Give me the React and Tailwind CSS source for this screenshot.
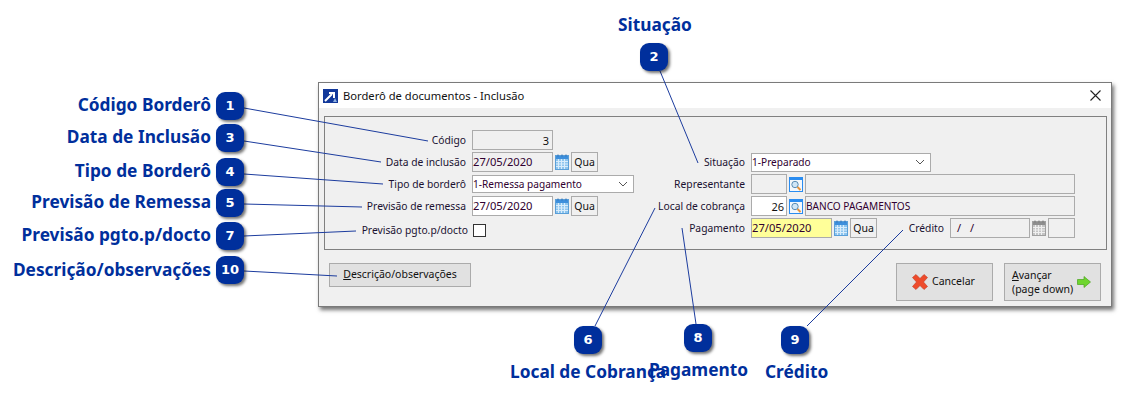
import React from 'react';

const FONT = 'font-["Noto_Sans","Open_Sans",sans-serif]';

const callouts = [
  { n: '1', title: 'Código Borderô', badge: 'left-[216px] top-[92px]', text: 'right-[914px] top-[94px]' },
  { n: '3', title: 'Data de Inclusão', badge: 'left-[216px] top-[124px]', text: 'right-[914px] top-[126px]' },
  { n: '4', title: 'Tipo de Borderô', badge: 'left-[216px] top-[158px]', text: 'right-[914px] top-[160px]' },
  { n: '5', title: 'Previsão de Remessa', badge: 'left-[216px] top-[189px]', text: 'right-[914px] top-[191px]' },
  { n: '7', title: 'Previsão pgto.p/docto', badge: 'left-[216px] top-[222px]', text: 'right-[914px] top-[224px]' },
  { n: '10', title: 'Descrição/observações', badge: 'left-[216px] top-[256px]', text: 'right-[914px] top-[259px]' },
  { n: '2', title: 'Situação', badge: 'left-[640px] top-[43px]', text: 'left-[618px] top-[14px]' },
  { n: '6', title: 'Local de Cobrança', badge: 'left-[574px] top-[326px]', text: 'left-[510px] top-[361px]' },
  { n: '8', title: 'Pagamento', badge: 'left-[684px] top-[324px]', text: 'left-[649px] top-[359px]' },
  { n: '9', title: 'Crédito', badge: 'left-[781px] top-[326px]', text: 'left-[765px] top-[361px]' },
];

const lines = [
  [244, 108, 428, 141],
  [244, 141, 381, 162],
  [244, 174, 383, 184],
  [244, 204, 362, 207],
  [244, 236, 356, 231],
  [244, 271, 337, 276],
  [660, 71, 698, 163],
  [595, 326, 655, 208],
  [696, 324, 682, 228],
  [807, 326, 903, 230],
];

const CalendarIcon = ({ off }) => (
  <svg width="14" height="16" viewBox="0 0 14 16" className="shrink-0">
    <rect x="0.5" y="1.5" width="13" height="14" fill={off ? '#c4c4c4' : '#8cc4ee'} stroke={off ? '#a0a0a0' : '#5a9fd8'} />
    <rect x="1" y="2" width="12" height="3" fill={off ? '#8e8e8e' : '#3d8fdc'} />
    <path d="M3 0.5v2M7 0.5v2M11 0.5v2" stroke={off ? '#777' : '#2f6fb5'} />
    <path d="M1 7.5h12M1 10h12M1 12.5h12M3.5 5v10M6.5 5v10M9.5 5v10" stroke={off ? '#efefef' : '#d8ecfb'} />
  </svg>
);

const LookupIcon = () => (
  <svg width="14" height="15" viewBox="0 0 14 15" className="shrink-0">
    <rect x="0.5" y="0.5" width="13" height="14" fill="#f4f8fc" stroke="#2a8cf0" />
    <rect x="1" y="1" width="12" height="2" fill="#2a8cf0" />
    <circle cx="6" cy="7.5" r="3.2" fill="#cfe6f7" stroke="#5b8db5" />
    <path d="M8.5 10l3 3" stroke="#e8923a" strokeWidth="2" />
  </svg>
);

const Chevron = () => (
  <svg width="10" height="6" viewBox="0 0 10 6" className="shrink-0">
    <path d="M1 1l4 4 4-4" fill="none" stroke="#555" />
  </svg>
);

const Field = ({ className = '', children }) => (
  <div className={`h-5 border border-[#ababab] flex items-center leading-none text-[#300030] shrink-0 ${className}`}>
    {children}
  </div>
);

const Qua = ({ empty }) => (
  <div className="h-5 w-[27px] border border-[#ababab] flex items-center justify-center text-[10.5px] leading-none text-[#111] shrink-0">
    {empty ? '' : 'Qua'}
  </div>
);

const Label = ({ className = '', children }) => (
  <span className={`text-[10.3px] leading-none text-[#1a1030] text-right shrink-0 ${className}`}>{children}</span>
);

const Row = ({ className = '', children }) => (
  <div className={`flex items-center h-5 ${className}`}>{children}</div>
);

const Btn = ({ className = '', children }) => (
  <div className={`border border-[#ababab] bg-[#e1e1e1] flex items-center text-[10.5px] text-[#111] ${className}`}>
    {children}
  </div>
);

export default function App() {
  return (
    <div className={`relative w-[1125px] h-[401px] bg-white overflow-hidden pt-[82px] pl-[318px] ${FONT}`}>
      <div className="w-[794px] h-[225px] border border-[#7a7a7a] bg-[#f0f0f0] shadow-[2px_3px_4px_rgba(0,0,0,0.55)] flex flex-col">
        <div className="h-[25px] bg-white flex items-center pl-1 pr-[9px] shrink-0">
          <svg width="15" height="14" viewBox="0 0 15 14" className="shrink-0">
            <rect width="15" height="14" fill="#12389a" />
            <path d="M2 12L9 5M6 4h5v5" fill="none" stroke="#fff" strokeWidth="2" />
            <path d="M10 13l2-4 2 4z" fill="#8fb0e0" />
          </svg>
          <span className="ml-[5px] text-[11.2px] text-[#111] leading-none">Borderô de documentos - Inclusão</span>
          <svg width="13" height="13" viewBox="0 0 13 13" className="ml-auto">
            <path d="M1.5 1.5l10 10M11.5 1.5l-10 10" stroke="#222" strokeWidth="1.1" />
          </svg>
        </div>

        <div className="mt-2 mx-[5px] h-[134px] w-[783px] border border-[#808080] pt-[13px] flex shrink-0">
          <div className="w-[315px] flex flex-col gap-[2px] shrink-0">
            <Row>
              <Label className="w-[141px]">Código</Label>
              <Field className="ml-[6px] w-[81px] justify-end pr-[3px] text-[11px] !text-[#111]">3</Field>
            </Row>
            <Row>
              <Label className="w-[141px]">Data de inclusão</Label>
              <Field className="ml-[6px] w-[81px] text-[11.2px]">27/05/2020</Field>
              <div className="mx-[2px]"><CalendarIcon /></div>
              <Qua />
            </Row>
            <Row>
              <Label className="w-[141px]">Tipo de borderô</Label>
              <Field className="ml-[6px] w-[162px] !h-[18px] bg-white justify-between pr-[5px] text-[10.1px]">1-Remessa pagamento<Chevron /></Field>
            </Row>
            <Row>
              <Label className="w-[141px]">Previsão de remessa</Label>
              <Field className="ml-[6px] w-[81px] bg-white text-[11.2px]">27/05/2020</Field>
              <div className="mx-[2px]"><CalendarIcon /></div>
              <Qua />
            </Row>
            <Row className="mt-[2px]">
              <Label className="w-[143px]">Previsão pgto.p/docto</Label>
              <div className="ml-[5px] w-[13px] h-[13px] border border-[#333] bg-white" />
            </Row>
          </div>

          <div className="flex flex-col gap-[2px] pt-[22px]">
            <Row>
              <Label className="w-[105px]">Situação</Label>
              <Field className="ml-[6px] w-[180px] !h-[19px] bg-white justify-between pr-[5px] text-[10.1px]">1-Preparado<Chevron /></Field>
            </Row>
            <Row>
              <Label className="w-[105px]">Representante</Label>
              <Field className="ml-[6px] w-[36px]" />
              <div className="mx-[2px]"><LookupIcon /></div>
              <Field className="w-[270px]" />
            </Row>
            <Row>
              <Label className="w-[105px]">Local de cobrança</Label>
              <Field className="ml-[6px] w-[36px] bg-white justify-end pr-[2px] text-[11px] !text-[#111]">26</Field>
              <div className="mx-[2px]"><LookupIcon /></div>
              <Field className="w-[270px] text-[10.1px]">BANCO PAGAMENTOS</Field>
            </Row>
            <Row>
              <Label className="w-[105px]">Pagamento</Label>
              <Field className="ml-[6px] w-[81px] bg-[#ffff99] text-[11.2px]">27/05/2020</Field>
              <div className="mx-[2px]"><CalendarIcon /></div>
              <Qua />
              <Label className="ml-auto w-[66px]">Crédito</Label>
              <Field className="ml-[6px] w-[80px] pl-[6px] text-[11.2px]">
                <span className="tracking-[3px]">/ /</span>
              </Field>
              <div className="mx-[2px]"><CalendarIcon off /></div>
              <Qua empty />
            </Row>
          </div>
        </div>

        <div className="flex items-start px-[10px] pt-[13px]">
          <Btn className="w-[142px] h-[24px] justify-center">
            <span><span className="underline">D</span>escrição/observações</span>
          </Btn>
          <Btn className="ml-auto w-[97px] h-[38px] justify-center gap-[4px]">
            <svg width="16" height="16" viewBox="0 0 16 16" className="-ml-[2px]">
              <path d="M0.5 3.5l3.5-3 4 4 4-4 3.5 3-4 4.5 4 4.5-3.5 3-4-4-4 4-3.5-3 4-4.5z" fill="#ee4b2b" stroke="#c4361d" strokeWidth="0.6" strokeLinejoin="round" />
            </svg>
            Cancelar
          </Btn>
          <Btn className="ml-[11px] w-[97px] h-[38px] pl-[7px] pr-[9px] justify-between">
            <span className="leading-[14px] whitespace-nowrap"><span className="underline">A</span>vançar<br />(page down)</span>
            <svg width="14" height="12" viewBox="0 0 14 12">
              <path d="M0.5 3.5h6.5v-3l6.5 5.5-6.5 5.5v-3h-6.5z" fill="#6fd62f" stroke="#4aa31c" strokeWidth="0.7" />
            </svg>
          </Btn>
        </div>
      </div>

      <svg width="1125" height="401" className="absolute left-0 top-0 pointer-events-none">
        {lines.map(([x1, y1, x2, y2], i) => (
          <line key={i} x1={x1} y1={y1} x2={x2} y2={y2} stroke="#1c3c9e" strokeWidth="1" />
        ))}
      </svg>

      {callouts.map((c) => (
        <React.Fragment key={c.n}>
          <div className={`absolute w-7 h-7 rounded-[9px] bg-[#002f9c] shadow-[2px_2px_3px_rgba(0,0,0,0.55)] flex items-center justify-center text-white text-[13px] font-bold font-["DejaVu_Sans",sans-serif] ${c.badge}`}>
            {c.n}
          </div>
          <div className={`absolute text-[17.3px] leading-[22px] font-bold text-[#002f9c] whitespace-nowrap ${c.text}`}>
            {c.title}
          </div>
        </React.Fragment>
      ))}
    </div>
  );
}
